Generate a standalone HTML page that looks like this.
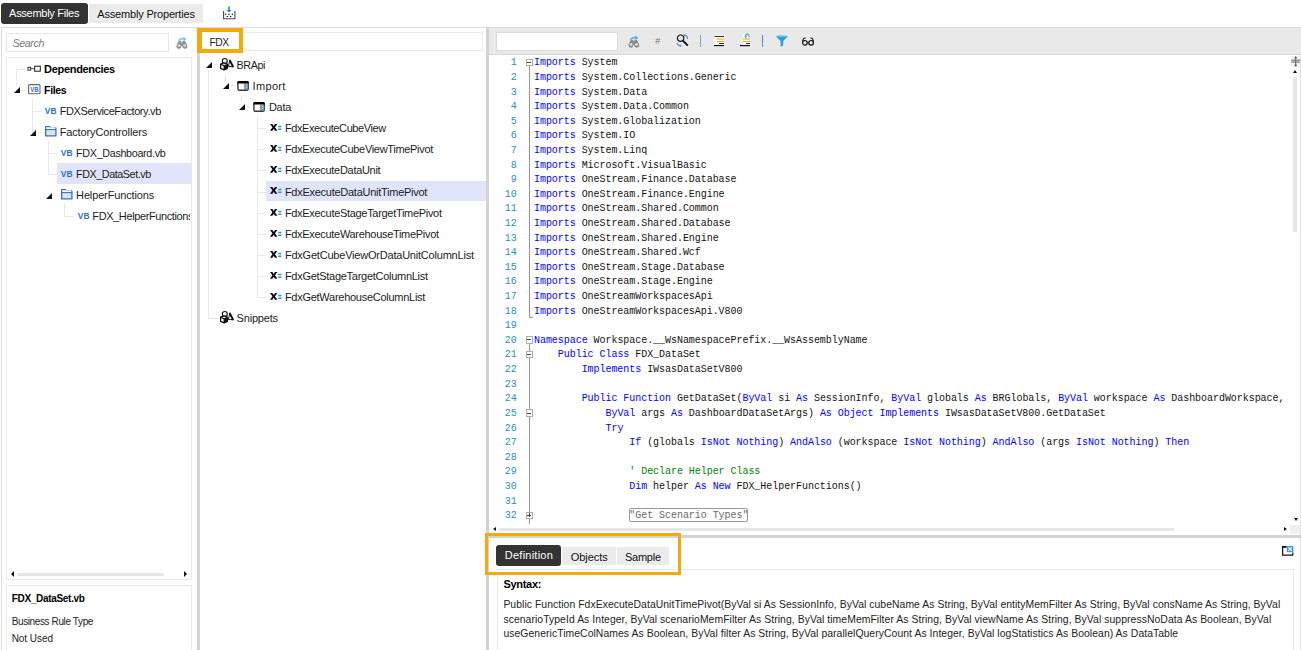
<!DOCTYPE html>
<html>
<head>
<meta charset="utf-8">
<style>
html,body{margin:0;padding:0;}
body{width:1301px;height:650px;overflow:hidden;background:#fff;position:relative;font-family:"Liberation Sans",sans-serif;font-size:11px;color:#1a1a1a;}
.abs{position:absolute;}
.t{position:absolute;white-space:nowrap;}
.b{font-weight:bold;}
.i{font-style:italic;}
.hl{position:absolute;background:#e1e5fc;}
.ln{position:absolute;background:#e8e8e8;}
.arr{position:absolute;width:0;height:0;border-left:6px solid transparent;border-bottom:6px solid #111;}
.cd{position:absolute;font-family:"Liberation Mono",monospace;font-size:10px;line-height:14.61px;white-space:pre;letter-spacing:-0.046px;top:56.3px;}
#code{left:534px;color:#111;}
#nums{left:490px;width:26.6px;color:#2b91af;text-align:right;}
.k{color:#0000ff;}
.c{color:#008000;}
svg{position:absolute;overflow:visible;}
</style>
</head>
<body>

<div class="abs" style="left:1px;top:3px;width:87px;height:21px;background:#333;border-radius:3px;"></div>
<div class="t" style="left:9.10px;top:5.00px;font-size:11px;line-height:16px;letter-spacing:-0.282px;color:#fff;">Assembly Files</div>
<div class="abs" style="left:89px;top:4px;width:114px;height:19px;background:#ebebeb;"></div>
<div class="t" style="left:97.30px;top:5.80px;font-size:11px;line-height:16px;letter-spacing:-0.182px;color:#111;">Assembly Properties</div>
<svg style="left:223px;top:6px" width="13" height="14" viewBox="0 0 13 14"><path d="M0.6 5 V12.7 H11.9 V5" fill="#fff" stroke="#444" stroke-width="1.1"/><path d="M5.2 0.6 H6.8 V4 H8.6 L6 6.6 L3.4 4 H5.2 Z" fill="#2f7bd6"/><g fill="#111"><circle cx="2.7" cy="8.2" r="0.75"/><circle cx="6" cy="8.2" r="0.75"/><circle cx="9.3" cy="8.2" r="0.75"/><circle cx="4.4" cy="10.5" r="0.8"/><circle cx="7.6" cy="10.5" r="0.8"/></g></svg>
<div class="abs" style="left:1px;top:27px;width:197px;height:630px;box-sizing:border-box;border:1px solid #dcdcdc;"></div>
<div class="abs" style="left:6px;top:33px;width:163px;height:19px;box-sizing:border-box;border:1px solid #e6e6e6;"></div>
<div class="t i" style="left:12.40px;top:34.80px;font-size:10.75px;line-height:16px;letter-spacing:-0.412px;color:#7a7a7a;">Search</div>
<svg style="left:175.8px;top:36.2px" width="11.64" height="12.61" viewBox="0 0 12 13"><path d="M2 5.2 C2.4 2.6 5 1.4 7.6 1.9 L7.5 0.2 L11 3 L7.8 5.6 L7.7 4 C5.8 3.6 4 4.2 3.4 5.4 Z" fill="#8ccaf0"/><path d="M2.9 5.2 L5.3 5.2 L5.7 6.6 L6.5 6.6 L6.9 5.2 L9.3 5.2 L11.5 9.4 A2.6 2.6 0 1 1 6.6 10.2 L5.6 10.2 A2.6 2.6 0 1 1 0.7 9.4 Z" fill="#929292"/><circle cx="3.2" cy="9.9" r="1.5" fill="#d6d6d6"/><circle cx="9" cy="9.9" r="1.5" fill="#d6d6d6"/></svg>
<div class="abs" style="left:6px;top:57px;width:186px;height:523px;box-sizing:border-box;border:1px solid #e9e9e9;"></div>
<div class="abs" style="left:6px;top:585px;width:186px;height:70px;box-sizing:border-box;border:1px solid #e9e9e9;"></div>
<div class="hl" style="left:57px;top:163px;width:134px;height:21px;"></div>
<div class="ln" style="left:16px;top:69px;width:1px;height:16px;"></div>
<div class="ln" style="left:16px;top:69px;width:9px;height:1px;"></div>
<div class="ln" style="left:21px;top:90px;width:5px;height:1px;"></div>
<div class="ln" style="left:32px;top:98px;width:1px;height:35px;"></div>
<div class="ln" style="left:32px;top:111px;width:10px;height:1px;"></div>
<div class="ln" style="left:37px;top:132px;width:5px;height:1px;"></div>
<div class="ln" style="left:48px;top:141px;width:1px;height:34px;"></div>
<div class="ln" style="left:48px;top:153px;width:10px;height:1px;"></div>
<div class="ln" style="left:48px;top:174px;width:10px;height:1px;"></div>
<div class="ln" style="left:53px;top:195px;width:5px;height:1px;"></div>
<div class="ln" style="left:64px;top:203px;width:1px;height:13px;"></div>
<div class="ln" style="left:64px;top:216px;width:10px;height:1px;"></div>
<svg style="left:27px;top:65px" width="15" height="8" viewBox="0 0 15 8"><rect x="0.9" y="2.3" width="2.8" height="2.8" fill="#fff" stroke="#222" stroke-width="0.9"/><line x1="3.7" y1="3.7" x2="7.4" y2="3.7" stroke="#222" stroke-width="0.8"/><rect x="7.7" y="1.2" width="5.6" height="5" fill="#fff" stroke="#222" stroke-width="1.05"/></svg>
<div class="t b" style="left:44.10px;top:60.70px;font-size:11px;line-height:16px;letter-spacing:-0.317px;color:#000;">Dependencies</div>
<div class="arr" style="left:14px;top:87px;"></div>
<svg style="left:28px;top:84px" width="13" height="11" viewBox="0 0 13 11"><rect x="0.6" y="0.6" width="11.4" height="9.2" rx="1" fill="#fff" stroke="#666" stroke-width="1.1"/><text x="2.2" y="7.9" font-family="Liberation Sans" font-weight="bold" font-size="6.8" fill="#2e72c6" textLength="8.4" lengthAdjust="spacingAndGlyphs">VB</text></svg>
<div class="t b" style="left:44.10px;top:81.70px;font-size:10.5px;line-height:16px;letter-spacing:-0.382px;color:#000;">Files</div>
<svg style="left:45px;top:105.3px" width="12" height="10" viewBox="0 0 12 10"><text x="-0.2" y="9.2" font-family="Liberation Sans" font-weight="bold" font-size="9.8" fill="#2e72c6" textLength="11.7" lengthAdjust="spacingAndGlyphs">VB</text></svg>
<div class="t" style="left:59.70px;top:103.00px;font-size:11px;line-height:16px;letter-spacing:-0.401px;color:#1c1c1c;">FDXServiceFactory.vb</div>
<div class="arr" style="left:30.4px;top:129.6px;"></div>
<svg style="left:44.7px;top:126px" width="12" height="11" viewBox="0 0 12 11"><path d="M0.65 9.9 V0.65 H4.6 L5.4 1.9 H10.9 V9.9 Z" fill="#dfe4f3" stroke="#2e72c6" stroke-width="1.3" stroke-linejoin="round"/><rect x="1.3" y="1.4" width="9" height="1.5" fill="#fff"/><line x1="0.65" y1="3.6" x2="10.9" y2="3.6" stroke="#2e72c6" stroke-width="1.1"/></svg>
<div class="t" style="left:59.70px;top:124.00px;font-size:11px;line-height:16px;letter-spacing:-0.139px;color:#1c1c1c;">FactoryControllers</div>
<svg style="left:61.2px;top:147.3px" width="12" height="10" viewBox="0 0 12 10"><text x="-0.2" y="9.2" font-family="Liberation Sans" font-weight="bold" font-size="9.8" fill="#2e72c6" textLength="11.7" lengthAdjust="spacingAndGlyphs">VB</text></svg>
<div class="t" style="left:76.10px;top:145.00px;font-size:10.75px;line-height:16px;letter-spacing:-0.321px;color:#1c1c1c;">FDX_Dashboard.vb</div>
<svg style="left:61.2px;top:168.3px" width="12" height="10" viewBox="0 0 12 10"><text x="-0.2" y="9.2" font-family="Liberation Sans" font-weight="bold" font-size="9.8" fill="#2e72c6" textLength="11.7" lengthAdjust="spacingAndGlyphs">VB</text></svg>
<div class="t" style="left:76.10px;top:166.00px;font-size:10.75px;line-height:16px;letter-spacing:-0.428px;color:#1c1c1c;">FDX_DataSet.vb</div>
<div class="arr" style="left:46.3px;top:192.6px;"></div>
<svg style="left:60.7px;top:189px" width="12" height="11" viewBox="0 0 12 11"><path d="M0.65 9.9 V0.65 H4.6 L5.4 1.9 H10.9 V9.9 Z" fill="#dfe4f3" stroke="#2e72c6" stroke-width="1.3" stroke-linejoin="round"/><rect x="1.3" y="1.4" width="9" height="1.5" fill="#fff"/><line x1="0.65" y1="3.6" x2="10.9" y2="3.6" stroke="#2e72c6" stroke-width="1.1"/></svg>
<div class="t" style="left:76.10px;top:187.00px;font-size:11px;line-height:16px;letter-spacing:-0.143px;color:#1c1c1c;">HelperFunctions</div>
<svg style="left:77.5px;top:210.3px" width="12" height="10" viewBox="0 0 12 10"><text x="-0.2" y="9.2" font-family="Liberation Sans" font-weight="bold" font-size="9.8" fill="#2e72c6" textLength="11.7" lengthAdjust="spacingAndGlyphs">VB</text></svg>
<div class="t" style="left:92.30px;top:208.00px;font-size:11px;line-height:16px;letter-spacing:-0.391px;color:#1c1c1c;width:98.1px;overflow:hidden;">FDX_HelperFunctions.vb</div>
<div class="abs" style="left:17px;top:573px;width:147.2px;height:2.8px;background:#e6e6e6;"></div>
<div class="abs" style="left:10.8px;top:571.4px;width:0;height:0;border-top:3px solid transparent;border-bottom:3px solid transparent;border-right:3.6px solid #111;"></div>
<div class="abs" style="left:184.2px;top:571.4px;width:0;height:0;border-top:3px solid transparent;border-bottom:3px solid transparent;border-left:3.6px solid #111;"></div>
<div class="t b" style="left:11.70px;top:590.70px;font-size:10px;line-height:16px;letter-spacing:-0.304px;color:#000;">FDX_DataSet.vb</div>
<div class="t" style="left:11.70px;top:613.90px;font-size:10px;line-height:16px;letter-spacing:-0.382px;color:#222;">Business Rule Type</div>
<div class="t" style="left:11.70px;top:630.90px;font-size:10px;line-height:16px;letter-spacing:-0.055px;color:#222;">Not Used</div>
<div class="abs" style="left:197px;top:28px;width:3px;height:623px;background:#d3d3d3;"></div>
<div class="abs" style="left:486px;top:28px;width:3px;height:623px;background:#d3d3d3;"></div>
<div class="abs" style="left:197px;top:27px;width:1104px;height:1px;background:#dcdcdc;"></div>
<div class="abs" style="left:1300px;top:28px;width:1px;height:623px;background:#e2e2e2;"></div>
<div class="abs" style="left:203px;top:31.5px;width:279.6px;height:19px;box-sizing:border-box;border:1px solid #ebebeb;"></div>
<div class="abs" style="left:197px;top:28px;width:46px;height:25px;border:4px solid #f6a90b;border-left-width:5px;box-sizing:border-box;background:#fff;"></div>
<div class="t" style="left:209.40px;top:35.20px;font-size:10.25px;line-height:16px;letter-spacing:-0.350px;color:#222;">FDX</div>
<div class="hl" style="left:266px;top:181.2px;width:220px;height:20.3px;"></div>
<div class="ln" style="left:208px;top:70px;width:1px;height:248px;"></div>
<div class="ln" style="left:208px;top:318.02px;width:11px;height:1px;"></div>
<div class="ln" style="left:225px;top:75px;width:1px;height:6px;"></div>
<div class="ln" style="left:241px;top:96px;width:1px;height:6px;"></div>
<div class="ln" style="left:213.5px;top:64px;width:4px;height:1px;"></div>
<div class="ln" style="left:229.5px;top:85px;width:4px;height:1px;"></div>
<div class="ln" style="left:245.5px;top:106px;width:4px;height:1px;"></div>
<div class="ln" style="left:257px;top:117px;width:1px;height:179.94px;"></div>
<div class="ln" style="left:257px;top:128px;width:9px;height:1px;"></div>
<div class="ln" style="left:257px;top:149px;width:9px;height:1px;"></div>
<div class="ln" style="left:257px;top:170px;width:9px;height:1px;"></div>
<div class="ln" style="left:257px;top:192px;width:9px;height:1px;"></div>
<div class="ln" style="left:257px;top:213px;width:9px;height:1px;"></div>
<div class="ln" style="left:257px;top:234px;width:9px;height:1px;"></div>
<div class="ln" style="left:257px;top:255px;width:9px;height:1px;"></div>
<div class="ln" style="left:257px;top:276px;width:9px;height:1px;"></div>
<div class="ln" style="left:257px;top:297px;width:9px;height:1px;"></div>
<div class="arr" style="left:206.3px;top:62px;"></div>
<svg style="left:220px;top:58.46px" width="14" height="12" viewBox="0 0 14 12"><circle cx="4.8" cy="2.9" r="2.45" fill="#fff" stroke="#111" stroke-width="1.15"/><path d="M9.7 2.5 L12.9 8.6 L8.4 8.6 Z" fill="#fff" stroke="#111" stroke-width="1" stroke-linejoin="round"/><path d="M9.9 2.5 L13 8.5" stroke="#111" stroke-width="1.8" stroke-linecap="round"/><path d="M0.6 6.2 L3.9 4.8 L7.4 6.2 L7.4 10.4 L3.9 11.9 L0.6 10.4 Z" fill="#fff" stroke="#111" stroke-width="1.25" stroke-linejoin="round"/><path d="M3.9 7.6 L7.4 6.2 L7.4 10.4 L3.9 11.9 Z" fill="#111" stroke="#111" stroke-width="0.6"/><path d="M0.6 6.2 L3.9 7.6" stroke="#111" stroke-width="1.2"/></svg>
<div class="t" style="left:236.60px;top:57.06px;font-size:10.75px;line-height:16px;letter-spacing:-0.418px;color:#1c1c1c;">BRApi</div>
<div class="arr" style="left:222.5px;top:83px;"></div>
<svg style="left:237px;top:80.74px" width="12" height="11" viewBox="0 0 12 11"><rect x="0.9" y="1" width="10.3" height="8.3" rx="1.2" fill="#fff" stroke="#3a3a3a" stroke-width="1.4"/><path d="M0.2 2.6 V1.6 Q0.2 0.1 1.6 0.1 H10.5 Q11.9 0.1 11.9 1.6 V2.6 Z" fill="#000"/><line x1="8" y1="2" x2="8" y2="9.2" stroke="#3a3a3a" stroke-width="1"/><rect x="8.7" y="3.1" width="1.9" height="1.3" fill="#3b9de0"/><rect x="8.7" y="5.1" width="1.9" height="1.3" fill="#3b9de0"/><rect x="8.7" y="7.1" width="1.9" height="1.3" fill="#3b9de0"/></svg>
<div class="t" style="left:252.60px;top:78.14px;font-size:11px;line-height:16px;letter-spacing:0.325px;color:#1c1c1c;">Import</div>
<div class="arr" style="left:238.6px;top:104.2px;"></div>
<svg style="left:253px;top:101.82px" width="12" height="11" viewBox="0 0 12 11"><rect x="0.9" y="1" width="10.3" height="8.3" rx="1.2" fill="#fff" stroke="#3a3a3a" stroke-width="1.4"/><path d="M0.2 2.6 V1.6 Q0.2 0.1 1.6 0.1 H10.5 Q11.9 0.1 11.9 1.6 V2.6 Z" fill="#000"/><line x1="8" y1="2" x2="8" y2="9.2" stroke="#3a3a3a" stroke-width="1"/><rect x="8.7" y="3.1" width="1.9" height="1.3" fill="#3b9de0"/><rect x="8.7" y="5.1" width="1.9" height="1.3" fill="#3b9de0"/><rect x="8.7" y="7.1" width="1.9" height="1.3" fill="#3b9de0"/></svg>
<div class="t" style="left:268.90px;top:99.22px;font-size:11px;line-height:16px;letter-spacing:-0.245px;color:#1c1c1c;">Data</div>
<svg style="left:269.8px;top:123.2px" width="12" height="9" viewBox="0 0 12 9"><path d="M0 1 L2.4 1 L3.7 2.9 L5 1 L7.4 1 L4.95 4.35 L7.4 7.7 L5 7.7 L3.7 5.8 L2.4 7.7 L0 7.7 L2.45 4.35 Z" fill="#0a0a0a"/><rect x="8.2" y="2.8" width="3.2" height="1.5" fill="#2b90d9"/><rect x="8.2" y="5.5" width="3.2" height="1.5" fill="#2b90d9"/></svg>
<div class="t" style="left:284.90px;top:120.30px;font-size:11px;line-height:16px;letter-spacing:-0.390px;color:#1c1c1c;">FdxExecuteCubeView</div>
<svg style="left:269.8px;top:144.28px" width="12" height="9" viewBox="0 0 12 9"><path d="M0 1 L2.4 1 L3.7 2.9 L5 1 L7.4 1 L4.95 4.35 L7.4 7.7 L5 7.7 L3.7 5.8 L2.4 7.7 L0 7.7 L2.45 4.35 Z" fill="#0a0a0a"/><rect x="8.2" y="2.8" width="3.2" height="1.5" fill="#2b90d9"/><rect x="8.2" y="5.5" width="3.2" height="1.5" fill="#2b90d9"/></svg>
<div class="t" style="left:284.90px;top:141.38px;font-size:11px;line-height:16px;letter-spacing:-0.312px;color:#1c1c1c;">FdxExecuteCubeViewTimePivot</div>
<svg style="left:269.8px;top:165.36px" width="12" height="9" viewBox="0 0 12 9"><path d="M0 1 L2.4 1 L3.7 2.9 L5 1 L7.4 1 L4.95 4.35 L7.4 7.7 L5 7.7 L3.7 5.8 L2.4 7.7 L0 7.7 L2.45 4.35 Z" fill="#0a0a0a"/><rect x="8.2" y="2.8" width="3.2" height="1.5" fill="#2b90d9"/><rect x="8.2" y="5.5" width="3.2" height="1.5" fill="#2b90d9"/></svg>
<div class="t" style="left:284.90px;top:162.46px;font-size:11px;line-height:16px;letter-spacing:-0.305px;color:#1c1c1c;">FdxExecuteDataUnit</div>
<svg style="left:269.8px;top:186.44px" width="12" height="9" viewBox="0 0 12 9"><path d="M0 1 L2.4 1 L3.7 2.9 L5 1 L7.4 1 L4.95 4.35 L7.4 7.7 L5 7.7 L3.7 5.8 L2.4 7.7 L0 7.7 L2.45 4.35 Z" fill="#0a0a0a"/><rect x="8.2" y="2.8" width="3.2" height="1.5" fill="#2b90d9"/><rect x="8.2" y="5.5" width="3.2" height="1.5" fill="#2b90d9"/></svg>
<div class="t" style="left:284.90px;top:183.54px;font-size:11px;line-height:16px;letter-spacing:-0.264px;color:#1c1c1c;">FdxExecuteDataUnitTimePivot</div>
<svg style="left:269.8px;top:207.52px" width="12" height="9" viewBox="0 0 12 9"><path d="M0 1 L2.4 1 L3.7 2.9 L5 1 L7.4 1 L4.95 4.35 L7.4 7.7 L5 7.7 L3.7 5.8 L2.4 7.7 L0 7.7 L2.45 4.35 Z" fill="#0a0a0a"/><rect x="8.2" y="2.8" width="3.2" height="1.5" fill="#2b90d9"/><rect x="8.2" y="5.5" width="3.2" height="1.5" fill="#2b90d9"/></svg>
<div class="t" style="left:284.90px;top:204.62px;font-size:11px;line-height:16px;letter-spacing:-0.303px;color:#1c1c1c;">FdxExecuteStageTargetTimePivot</div>
<svg style="left:269.8px;top:228.6px" width="12" height="9" viewBox="0 0 12 9"><path d="M0 1 L2.4 1 L3.7 2.9 L5 1 L7.4 1 L4.95 4.35 L7.4 7.7 L5 7.7 L3.7 5.8 L2.4 7.7 L0 7.7 L2.45 4.35 Z" fill="#0a0a0a"/><rect x="8.2" y="2.8" width="3.2" height="1.5" fill="#2b90d9"/><rect x="8.2" y="5.5" width="3.2" height="1.5" fill="#2b90d9"/></svg>
<div class="t" style="left:284.90px;top:225.70px;font-size:11px;line-height:16px;letter-spacing:-0.308px;color:#1c1c1c;">FdxExecuteWarehouseTimePivot</div>
<svg style="left:269.8px;top:249.68px" width="12" height="9" viewBox="0 0 12 9"><path d="M0 1 L2.4 1 L3.7 2.9 L5 1 L7.4 1 L4.95 4.35 L7.4 7.7 L5 7.7 L3.7 5.8 L2.4 7.7 L0 7.7 L2.45 4.35 Z" fill="#0a0a0a"/><rect x="8.2" y="2.8" width="3.2" height="1.5" fill="#2b90d9"/><rect x="8.2" y="5.5" width="3.2" height="1.5" fill="#2b90d9"/></svg>
<div class="t" style="left:284.90px;top:246.78px;font-size:11px;line-height:16px;letter-spacing:-0.211px;color:#1c1c1c;">FdxGetCubeViewOrDataUnitColumnList</div>
<svg style="left:269.8px;top:270.76px" width="12" height="9" viewBox="0 0 12 9"><path d="M0 1 L2.4 1 L3.7 2.9 L5 1 L7.4 1 L4.95 4.35 L7.4 7.7 L5 7.7 L3.7 5.8 L2.4 7.7 L0 7.7 L2.45 4.35 Z" fill="#0a0a0a"/><rect x="8.2" y="2.8" width="3.2" height="1.5" fill="#2b90d9"/><rect x="8.2" y="5.5" width="3.2" height="1.5" fill="#2b90d9"/></svg>
<div class="t" style="left:284.90px;top:267.86px;font-size:11px;line-height:16px;letter-spacing:-0.281px;color:#1c1c1c;">FdxGetStageTargetColumnList</div>
<svg style="left:269.8px;top:291.84px" width="12" height="9" viewBox="0 0 12 9"><path d="M0 1 L2.4 1 L3.7 2.9 L5 1 L7.4 1 L4.95 4.35 L7.4 7.7 L5 7.7 L3.7 5.8 L2.4 7.7 L0 7.7 L2.45 4.35 Z" fill="#0a0a0a"/><rect x="8.2" y="2.8" width="3.2" height="1.5" fill="#2b90d9"/><rect x="8.2" y="5.5" width="3.2" height="1.5" fill="#2b90d9"/></svg>
<div class="t" style="left:284.90px;top:288.94px;font-size:11px;line-height:16px;letter-spacing:-0.268px;color:#1c1c1c;">FdxGetWarehouseColumnList</div>
<svg style="left:220px;top:311.42px" width="14" height="12" viewBox="0 0 14 12"><circle cx="4.8" cy="2.9" r="2.45" fill="#fff" stroke="#111" stroke-width="1.15"/><path d="M9.7 2.5 L12.9 8.6 L8.4 8.6 Z" fill="#fff" stroke="#111" stroke-width="1" stroke-linejoin="round"/><path d="M9.9 2.5 L13 8.5" stroke="#111" stroke-width="1.8" stroke-linecap="round"/><path d="M0.6 6.2 L3.9 4.8 L7.4 6.2 L7.4 10.4 L3.9 11.9 L0.6 10.4 Z" fill="#fff" stroke="#111" stroke-width="1.25" stroke-linejoin="round"/><path d="M3.9 7.6 L7.4 6.2 L7.4 10.4 L3.9 11.9 Z" fill="#111" stroke="#111" stroke-width="0.6"/><path d="M0.6 6.2 L3.9 7.6" stroke="#111" stroke-width="1.2"/></svg>
<div class="t" style="left:236.60px;top:310.02px;font-size:11px;line-height:16px;letter-spacing:-0.201px;color:#1c1c1c;">Snippets</div>
<div class="abs" style="left:489px;top:28px;width:812px;height:26px;background:#e9e9e9;"></div>
<div class="abs" style="left:489px;top:54px;width:812px;height:1px;background:#d6d6d6;"></div>
<div class="abs" style="left:496px;top:31.6px;width:122px;height:19px;box-sizing:border-box;border:1px solid #dbdbdb;background:#fff;"></div>
<svg style="left:627.5px;top:34.8px" width="11.52" height="12.48" viewBox="0 0 12 13"><path d="M2 5.2 C2.4 2.6 5 1.4 7.6 1.9 L7.5 0.2 L11 3 L7.8 5.6 L7.7 4 C5.8 3.6 4 4.2 3.4 5.4 Z" fill="#62b1ea"/><path d="M2.9 5.2 L5.3 5.2 L5.7 6.6 L6.5 6.6 L6.9 5.2 L9.3 5.2 L11.5 9.4 A2.6 2.6 0 1 1 6.6 10.2 L5.6 10.2 A2.6 2.6 0 1 1 0.7 9.4 Z" fill="#8a8a8a"/><circle cx="3.2" cy="9.9" r="1.5" fill="#d9d9d9"/><circle cx="9" cy="9.9" r="1.5" fill="#d9d9d9"/></svg>
<div class="t" style="left:655.30px;top:32.60px;font-size:9px;line-height:16px;letter-spacing:0.000px;color:#777;">#</div>
<svg style="left:676px;top:33.5px" width="13" height="13" viewBox="0 0 13 13"><circle cx="4.6" cy="4.2" r="3.2" fill="none" stroke="#111" stroke-width="1.2"/><line x1="6.9" y1="6.6" x2="11.8" y2="11.6" stroke="#111" stroke-width="2"/><path d="M8.6 1.2 C10.6 1.6 11.6 3.2 11.4 5" fill="none" stroke="#3b9de0" stroke-width="1.2"/><path d="M7.2 0.6 L9.6 0.2 L9 2.6 Z" fill="#3b9de0"/><path d="M1 8.6 C1.2 10.6 2.8 11.8 4.6 11.6" fill="none" stroke="#3b9de0" stroke-width="1.2"/><path d="M3.8 10.2 L6 11.8 L3.8 13 Z" fill="#3b9de0"/></svg>
<div class="abs" style="left:699.5px;top:35px;width:1.3px;height:11.5px;background:#7d9fe0;"></div>
<svg style="left:714px;top:35px" width="10" height="12" viewBox="0 0 10 12"><rect x="0" y="0.5" width="10" height="11.3" fill="#fafafa"/><rect x="0.5" y="1" width="9.5" height="1" fill="#333"/><rect x="2.5" y="3.5" width="7.5" height="1" fill="#f0a020"/><rect x="2.5" y="6" width="7.5" height="1" fill="#f0a020"/><rect x="5" y="8" width="5" height="1" fill="#222"/><rect x="0" y="10" width="10" height="1.2" fill="#111"/></svg>
<svg style="left:740px;top:34px" width="10" height="13" viewBox="0 0 10 13"><rect x="2.5" y="0" width="7.5" height="12" fill="#fafafa"/><path d="M5.7 3.3 A1.9 1.9 0 1 1 8.7 3.4" fill="none" stroke="#3b9de0" stroke-width="1.1"/><path d="M4.4 2.5 L6.7 2 L6.3 4.5 Z" fill="#3b9de0"/><rect x="3" y="4.5" width="7" height="1" fill="#f0a020"/><rect x="3" y="7" width="7" height="1" fill="#f0a020"/><rect x="6" y="9" width="4" height="1" fill="#222"/><rect x="0" y="11" width="10" height="1.2" fill="#111"/></svg>
<div class="abs" style="left:762.1px;top:35px;width:1.3px;height:11.5px;background:#5a85d6;"></div>
<svg style="left:776px;top:35px" width="12" height="12" viewBox="0 0 12 12"><path d="M0.2 1.2 C0.2 0.2 11.6 0.2 11.6 1.2 C11.6 2 7.4 5.4 7.2 6.2 L7.2 10.4 L4.6 11.8 L4.6 6.2 C4.4 5.4 0.2 2 0.2 1.2 Z" fill="#2d9de0"/><ellipse cx="5.9" cy="1.2" rx="4.6" ry="0.6" fill="#8fcdf3"/></svg>
<svg style="left:802px;top:36.5px" width="12" height="9" viewBox="0 0 12 9"><circle cx="2.9" cy="5.8" r="2.3" fill="none" stroke="#111" stroke-width="1.2"/><circle cx="9.1" cy="5.8" r="2.3" fill="none" stroke="#111" stroke-width="1.2"/><path d="M5.2 5.4 Q6 4.6 6.8 5.4" fill="none" stroke="#111" stroke-width="1"/><path d="M0.7 5 C0.6 2.4 1.6 0.8 3.6 1 M11.3 5 C11.4 2.4 10.4 0.8 8.4 1" fill="none" stroke="#111" stroke-width="1.1"/></svg>
<div id="nums" class="cd">1
2
3
4
5
6
7
8
9
10
11
12
13
14
15
16
17
18
19
20
21
22
23
24
25
26
27
28
29
30
31
32</div>
<div id="code" class="cd"><span class="k">Imports</span> System
<span class="k">Imports</span> System.Collections.Generic
<span class="k">Imports</span> System.Data
<span class="k">Imports</span> System.Data.Common
<span class="k">Imports</span> System.Globalization
<span class="k">Imports</span> System.IO
<span class="k">Imports</span> System.Linq
<span class="k">Imports</span> Microsoft.VisualBasic
<span class="k">Imports</span> OneStream.Finance.Database
<span class="k">Imports</span> OneStream.Finance.Engine
<span class="k">Imports</span> OneStream.Shared.Common
<span class="k">Imports</span> OneStream.Shared.Database
<span class="k">Imports</span> OneStream.Shared.Engine
<span class="k">Imports</span> OneStream.Shared.Wcf
<span class="k">Imports</span> OneStream.Stage.Database
<span class="k">Imports</span> OneStream.Stage.Engine
<span class="k">Imports</span> OneStreamWorkspacesApi
<span class="k">Imports</span> OneStreamWorkspacesApi.V800

<span class="k">Namespace</span> Workspace.__WsNamespacePrefix.__WsAssemblyName
    <span class="k">Public Class</span> FDX_DataSet
        <span class="k">Implements</span> IWsasDataSetV800

        <span class="k">Public Function</span> GetDataSet(<span class="k">ByVal</span> si <span class="k">As</span> SessionInfo, <span class="k">ByVal</span> globals <span class="k">As</span> BRGlobals, <span class="k">ByVal</span> workspace <span class="k">As</span> DashboardWorkspace,
            <span class="k">ByVal</span> args <span class="k">As</span> DashboardDataSetArgs) <span class="k">As Object Implements</span> IWsasDataSetV800.GetDataSet
            <span class="k">Try</span>
                <span class="k">If</span> (globals <span class="k">IsNot Nothing</span>) <span class="k">AndAlso</span> (workspace <span class="k">IsNot Nothing</span>) <span class="k">AndAlso</span> (args <span class="k">IsNot Nothing</span>) <span class="k">Then</span>

                <span class="c">' Declare Helper Class</span>
                <span class="k">Dim</span> helper <span class="k">As New</span> FDX_HelperFunctions()

                <span style="color:#6a6a6a">"Get Scenario Types"</span></div>
<div class="abs" style="left:529px;top:65.605px;width:1px;height:251.37px;background:#979797;"></div>
<div class="abs" style="left:529px;top:316.975px;width:4px;height:1px;background:#979797;"></div>
<div class="abs" style="left:529px;top:343.195px;width:1px;height:181.305px;background:#979797;"></div>
<div class="abs" style="left:525.5px;top:58.705px;width:7.5px;height:7.4px;box-sizing:border-box;border:1px solid #adadad;background:#fff;"></div>
<div class="abs" style="left:527.3px;top:61.905px;width:4px;height:1px;background:#444;"></div>
<div class="abs" style="left:525.5px;top:336.295px;width:7.5px;height:7.4px;box-sizing:border-box;border:1px solid #adadad;background:#fff;"></div>
<div class="abs" style="left:527.3px;top:339.495px;width:4px;height:1px;background:#444;"></div>
<div class="abs" style="left:525.5px;top:350.905px;width:7.5px;height:7.4px;box-sizing:border-box;border:1px solid #adadad;background:#fff;"></div>
<div class="abs" style="left:527.3px;top:354.105px;width:4px;height:1px;background:#444;"></div>
<div class="abs" style="left:525.5px;top:409.345px;width:7.5px;height:7.4px;box-sizing:border-box;border:1px solid #adadad;background:#fff;"></div>
<div class="abs" style="left:527.3px;top:412.545px;width:4px;height:1px;background:#444;"></div>
<div class="abs" style="left:525.5px;top:511.615px;width:7.5px;height:7.4px;box-sizing:border-box;border:1px solid #adadad;background:#fff;"></div>
<div class="abs" style="left:527.3px;top:514.815px;width:4px;height:1px;background:#444;"></div>
<div class="abs" style="left:528.8px;top:513.315px;width:1px;height:4px;background:#444;"></div>
<div class="abs" style="left:629px;top:508.015px;width:119px;height:14.4px;box-sizing:border-box;border:1px solid #9a9a9a;border-radius:2px;"></div>
<div class="abs" style="left:1290.5px;top:55.5px;width:9.5px;height:11px;background:#f4f4f4;"></div>
<svg style="left:1290.8px;top:55.5px" width="9.4" height="11" viewBox="0 0 9.4 11"><rect x="0.2" y="3.7" width="9" height="1" fill="#666"/><rect x="0.2" y="5.6" width="9" height="1" fill="#666"/><line x1="4.7" y1="0.8" x2="4.7" y2="10.2" stroke="#555" stroke-width="0.9"/><path d="M3 2.3 L4.7 0.3 L6.4 2.3 Z M3 8.7 L4.7 10.7 L6.4 8.7 Z" fill="#555"/></svg>
<div class="abs" style="left:1293.4px;top:70.2px;width:0;height:0;border-left:2.5px solid transparent;border-right:2.5px solid transparent;border-bottom:3.2px solid #111;"></div>
<div class="abs" style="left:1293.3px;top:77px;width:4.2px;height:154.5px;background:#e6e6e6;"></div>
<div class="abs" style="left:1293.6px;top:518.2px;width:0;height:0;border-left:2.5px solid transparent;border-right:2.5px solid transparent;border-top:3.2px solid #111;"></div>
<div class="abs" style="left:492.6px;top:526.8px;width:0;height:0;border-top:2.9px solid transparent;border-bottom:2.9px solid transparent;border-right:3.5px solid #111;"></div>
<div class="abs" style="left:499px;top:528.2px;width:675px;height:2.8px;background:#e6e6e6;"></div>
<div class="abs" style="left:1283.5px;top:526.6px;width:0;height:0;border-top:2.9px solid transparent;border-bottom:2.9px solid transparent;border-left:3.6px solid #111;"></div>
<div class="abs" style="left:1290px;top:525px;width:10px;height:8.5px;background:#f0f0f0;"></div>
<div class="abs" style="left:489px;top:534.5px;width:812px;height:3px;background:#d3d3d3;"></div>
<div class="abs" style="left:497px;top:569px;width:797px;height:90px;box-sizing:border-box;border:1px solid #e9e9e9;"></div>
<div class="abs" style="left:496.4px;top:545px;width:64.8px;height:21px;background:#333;border-radius:3px;"></div>
<div class="t" style="left:504.80px;top:547.40px;font-size:11px;line-height:16px;letter-spacing:0.238px;color:#fff;">Definition</div>
<div class="abs" style="left:562px;top:546.8px;width:53.5px;height:18.6px;background:#ebebeb;"></div>
<div class="t" style="left:570.80px;top:548.60px;font-size:11px;line-height:16px;letter-spacing:-0.065px;color:#111;">Objects</div>
<div class="abs" style="left:616.6px;top:546.8px;width:52.8px;height:18.6px;background:#ebebeb;"></div>
<div class="t" style="left:624.90px;top:548.60px;font-size:11px;line-height:16px;letter-spacing:-0.220px;color:#111;">Sample</div>
<div class="abs" style="left:485.4px;top:533px;width:195.7px;height:42.2px;border:3.3px solid #f6a90b;box-sizing:border-box;"></div>
<div class="t b" style="left:503.40px;top:576.20px;font-size:11px;line-height:16px;letter-spacing:-0.290px;color:#000;">Syntax:</div>
<div class="t" style="left:503.40px;top:597.10px;font-size:10.4px;line-height:16px;letter-spacing:0.053px;color:#222;">Public Function FdxExecuteDataUnitTimePivot(ByVal si As SessionInfo, ByVal cubeName As String, ByVal entityMemFilter As String, ByVal consName As String, ByVal</div>
<div class="t" style="left:503.40px;top:611.60px;font-size:10.4px;line-height:16px;letter-spacing:0.064px;color:#222;">scenarioTypeId As Integer, ByVal scenarioMemFilter As String, ByVal timeMemFilter As String, ByVal viewName As String, ByVal suppressNoData As Boolean, ByVal</div>
<div class="t" style="left:503.40px;top:626.10px;font-size:10.4px;line-height:16px;letter-spacing:0.062px;color:#222;">useGenericTimeColNames As Boolean, ByVal filter As String, ByVal parallelQueryCount As Integer, ByVal logStatistics As Boolean) As DataTable</div>
<svg style="left:1282px;top:546px" width="12" height="10" viewBox="0 0 12 10"><path d="M0.6 0.6 V9.2 H10.8 V6.6" fill="none" stroke="#111" stroke-width="1.2"/><rect x="0" y="0" width="4.6" height="1.8" fill="#111"/><rect x="4.8" y="0" width="6.6" height="6.2" fill="#3b9de0"/><path d="M6.4 1.4 L9.8 4.8 M9.8 1.4 L6.4 4.8" stroke="#fff" stroke-width="1.1"/></svg>
</body>
</html>
